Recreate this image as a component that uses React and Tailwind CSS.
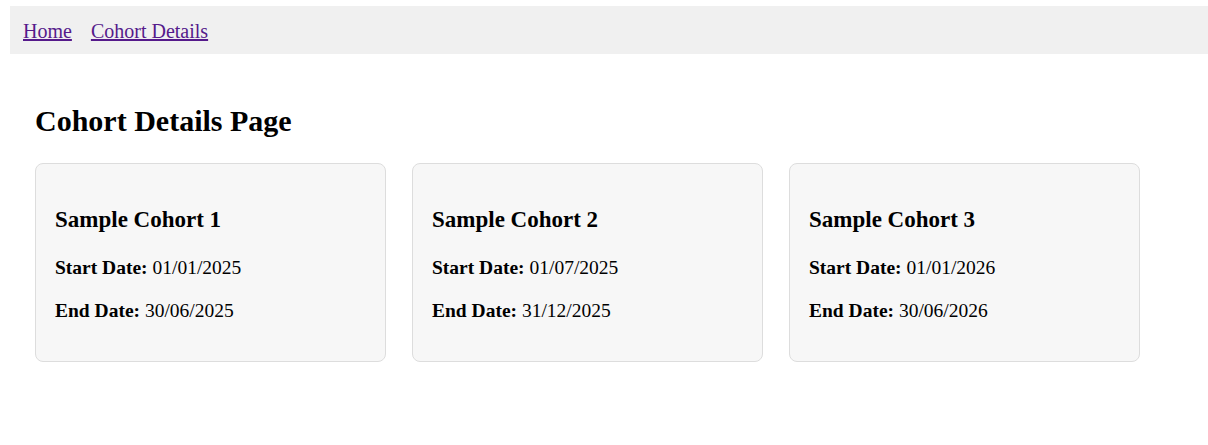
export default function App() {
  const cohorts = [
    { name: "Sample Cohort 1", start: "01/01/2025", end: "30/06/2025" },
    { name: "Sample Cohort 2", start: "01/07/2025", end: "31/12/2025" },
    { name: "Sample Cohort 3", start: "01/01/2026", end: "30/06/2026" },
  ];

  return (
    <div className="min-h-[445px] bg-white text-black font-['Liberation_Serif','Times_New_Roman',serif]">
      <nav className="ml-[10px] pt-[6px]">
        <div className="h-[48px] bg-[#f0f0f0] flex items-center pl-[13px] gap-[19px] text-[20px] leading-[24px] pt-[2px]">
          <a href="#" className="underline text-[#551a8b]">Home</a>
          <a href="#" className="underline text-[#551a8b]">Cohort Details</a>
        </div>
      </nav>

      <main className="px-[35px]">
        <h2 className="mt-[50px] mb-[25px] text-[30px] leading-[34px] font-bold">Cohort Details Page</h2>

        <div className="flex gap-[26px]">
          {cohorts.map((c) => (
            <div
              key={c.name}
              className="w-[351px] h-[199px] px-[19px] pt-[43px] border border-[#dddddd] rounded-lg bg-[#f7f7f7]"
            >
              <h3 className="text-[23px] leading-[26px] font-bold">{c.name}</h3>
              <p className="mt-[24px] text-[19.5px] leading-[22px]">
                <strong>Start Date:</strong> {c.start}
              </p>
              <p className="mt-[21px] text-[19.5px] leading-[22px]">
                <strong>End Date:</strong> {c.end}
              </p>
            </div>
          ))}
        </div>
      </main>
    </div>
  );
}
